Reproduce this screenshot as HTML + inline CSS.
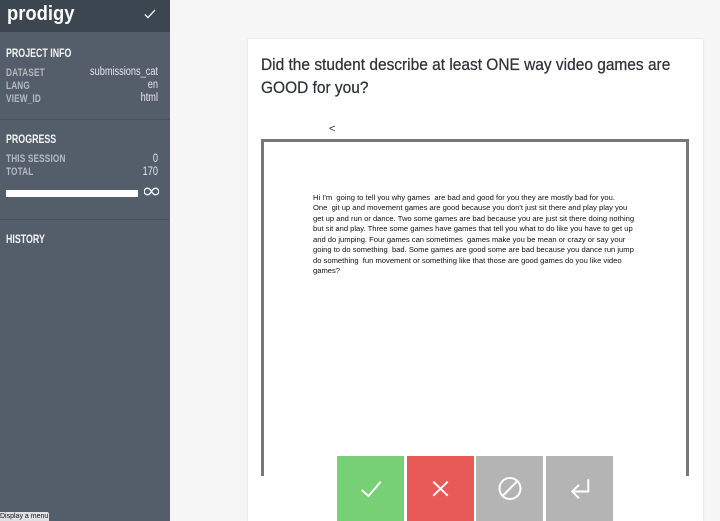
<!DOCTYPE html>
<html>
<head>
<meta charset="utf-8">
<style>
*{box-sizing:border-box;margin:0;padding:0}
html,body{width:720px;height:521px;overflow:hidden;background:#f6f6f6;font-family:"Liberation Sans",sans-serif}
.abs{position:absolute;white-space:nowrap}
#side{position:absolute;left:0;top:0;width:170px;height:521px;background:#545e6a}
#top{position:absolute;left:0;top:0;width:170px;height:32px;background:#3b4651}
.h{font-weight:700;font-size:11.5px;line-height:13px;color:#f2f3f4;left:6px;transform:scaleX(.77);transform-origin:left}
.k{font-size:11px;line-height:13px;color:#b4b9bf;left:6px;font-weight:700;transform:scaleX(.75);transform-origin:left;letter-spacing:.2px}
.v{font-size:11.5px;line-height:13px;color:#e4e6e8;left:58px;width:100px;text-align:right;transform:scaleX(.8);transform-origin:right}
.rule{position:absolute;left:0;width:170px;height:1px;background:#49525d}
#card{position:absolute;left:248px;top:39px;width:455px;height:482px;background:#fff;box-shadow:0 0 2px rgba(0,0,0,.14)}
#q{position:absolute;left:261px;top:53px;font-size:17px;line-height:23px;color:#2f3338;white-space:nowrap;-webkit-text-stroke:.25px #2f3338;transform:scaleX(.91);transform-origin:left}
#frame{position:absolute;left:261px;top:139px;width:428px;height:337px;border:3px solid #777;border-bottom:0;background:#fff}
#essay{position:absolute;left:313px;top:193px;font-size:7.6px;line-height:10.45px;color:#111;white-space:nowrap}
.b{position:absolute;top:456px;height:65px}
.b svg{position:absolute;left:0;top:0}
#tip{position:absolute;left:0;top:512px;width:49px;height:9px;background:#dfe1e3;border-radius:0 2px 0 0;font-size:7px;line-height:9px;color:#111;white-space:nowrap;overflow:hidden}
</style>
</head>
<body>
<div id="side"></div>
<div id="top"></div>
<div class="abs" style="left:7px;top:-1px;font-size:20px;line-height:30px;font-weight:700;color:#fbfbfb;transform:scaleX(.92);transform-origin:left">prodigy</div>
<svg class="abs" style="left:143px;top:8px" width="14" height="12" viewBox="0 0 14 12"><path d="M1.8 6.4 L5 9.6 L12 2" fill="none" stroke="#f4f5f6" stroke-width="1.3"/></svg>

<div class="abs h" style="top:48px">PROJECT INFO</div>
<div class="abs k" style="top:67px">DATASET</div>
<div class="abs v" style="top:66px">submissions_cat</div>
<div class="abs k" style="top:80px">LANG</div>
<div class="abs v" style="top:79px">en</div>
<div class="abs k" style="top:93px">VIEW_ID</div>
<div class="abs v" style="top:92px">html</div>
<div class="rule" style="top:119px"></div>

<div class="abs h" style="top:134px">PROGRESS</div>
<div class="abs k" style="top:153px">THIS SESSION</div>
<div class="abs v" style="top:153px">0</div>
<div class="abs k" style="top:166px">TOTAL</div>
<div class="abs v" style="top:166px">170</div>
<div class="abs" style="left:6px;top:189.500px;width:132px;height:7.500px;background:#fff"></div>
<svg class="abs" style="left:144px;top:187px" width="15" height="9" viewBox="0 0 15 9"><path d="M7.5 4.5C6 2 4.9 1.2 3.5 1.2A3.3 3.3 0 0 0 3.5 7.8C4.9 7.8 6 7 7.5 4.5C9 2 10.1 1.2 11.5 1.2A3.3 3.3 0 0 1 11.5 7.8C10.1 7.8 9 7 7.5 4.5Z" fill="none" stroke="#f4f5f6" stroke-width="1.3"/></svg>
<div class="rule" style="top:219px"></div>
<div class="abs h" style="top:234px">HISTORY</div>

<div id="card"></div>
<div id="q">Did the student describe at least ONE way video games are<br>GOOD for you?</div>
<div class="abs" style="left:329px;top:123px;font-size:11px;line-height:13px;color:#333">&lt;</div>
<div id="frame"></div>
<div id="essay">Hi I'm&nbsp; going to tell you why games&nbsp; are bad and good for you they are mostly bad for you.<br>One&nbsp; git up and movement games are good because you don't just sit there and play play you<br>get up and run or dance. Two some games are bad because you are just sit there doing nothing<br>but sit and play. Three some games have games that tell you what to do like you have to get up<br>and do jumping. Four games can sometimes&nbsp; games make you be mean or crazy or say your<br>going to do something&nbsp; bad. Some games are good some are bad because you dance run jump<br>do something&nbsp; fun movement or something like that those are good games do you like video<br>games?</div>

<div class="b" style="left:337px;width:67px;background:#77cf76">
<svg width="67" height="65" viewBox="0 0 67 65"><path d="M24.700 34L31.500 40L43.700 25.700" fill="none" stroke="#fff" stroke-width="2"/></svg></div>
<div class="b" style="left:407px;width:67px;background:#e85a55">
<svg width="67" height="65" viewBox="0 0 67 65"><path d="M26.300 25.700L40.700 39.700M40.700 25.700L26.300 39.700" fill="none" stroke="#fff" stroke-width="2"/></svg></div>
<div class="b" style="left:476px;width:67px;background:#b4b4b4">
<svg width="67" height="65" viewBox="0 0 67 65"><circle cx="34" cy="32.500" r="10.500" fill="none" stroke="#fff" stroke-width="2"/><path d="M26.500 40L41.500 25" fill="none" stroke="#fff" stroke-width="2"/></svg></div>
<div class="b" style="left:546px;width:67px;background:#b4b4b4">
<svg width="67" height="65" viewBox="0 0 67 65"><path d="M42.300 23.300V35.500H26.300M33 28.800L26.300 35.500L33 42.200" fill="none" stroke="#fff" stroke-width="2"/></svg></div>

<div id="tip">Display a menu</div>
</body>
</html>
